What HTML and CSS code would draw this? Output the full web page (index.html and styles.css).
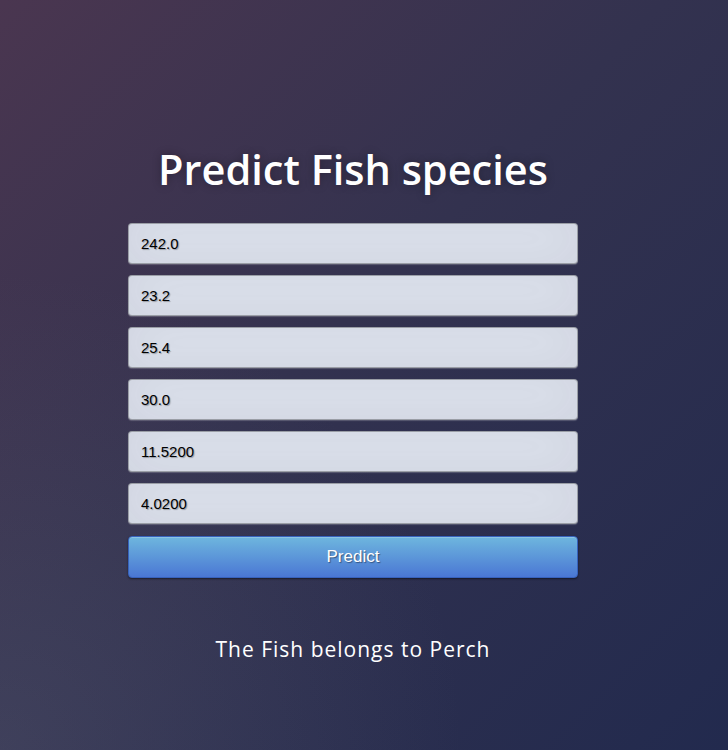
FILE: index.html
```html
<!DOCTYPE html>
<html>
<head>
<meta charset="utf-8">
<link rel="stylesheet" href="styles.css">
</head>
<body>
<main class="login">
  <h1 class="title">Predict Fish species</h1>
  <form class="form">
    <input class="field" type="text" value="242.0">
    <input class="field" type="text" value="23.2">
    <input class="field" type="text" value="25.4">
    <input class="field" type="text" value="30.0">
    <input class="field" type="text" value="11.5200">
    <input class="field" type="text" value="4.0200">
    <button class="btn" type="button">Predict</button>
  </form>
  <p class="result">The Fish belongs to Perch</p>
</main>
</body>
</html>
```
FILE: styles.css
```css
html, body {
  margin: 0;
  padding: 0;
}
body {
  width: 728px;
  height: 750px;
  overflow: hidden;
  background:
    radial-gradient(ellipse at 0% 100%, rgba(104,108,128,0.25) 0%, rgba(104,108,128,0) 45%),
    linear-gradient(135deg, #4a3650 0%, #33324f 45%, #222a4e 100%);
  font-family: "Open Sans", sans-serif;
}
.login {
  width: 450px;
  margin: 0 0 0 128px;
  padding-top: 141px;
  display: flex;
  flex-direction: column;
}
.title {
  height: 56px;
  margin: 0 0 26px;
  font-size: 41.5px;
  font-weight: 600;
  line-height: 56px;
  color: #fff;
  text-align: center;
  text-shadow: 0 0 10px rgba(0,0,0,0.3);
}
.form {
  display: flex;
  flex-direction: column;
  gap: 11px;
}
.field {
  box-sizing: border-box;
  width: 100%;
  height: 41px;
  margin: 0;
  padding: 0 12px;
  font-family: "Liberation Sans", Arial, sans-serif;
  font-size: 15px;
  color: #000;
  text-shadow: 1px 1px 1px rgba(0,0,0,0.3);
  background: #dde2ee;
  border: 1px solid rgba(0,0,0,0.3);
  border-radius: 4px;
  box-shadow: inset 0 -5px 45px rgba(100,100,100,0.1), 0 1px 1px rgba(255,255,255,0.2);
  outline: none;
}
.btn {
  box-sizing: border-box;
  width: 100%;
  height: 42px;
  margin: 1px 0 0;
  font-family: "Liberation Sans", Arial, sans-serif;
  font-size: 17px;
  color: #fff;
  text-shadow: 1px 1px 1px rgba(0,0,0,0.4);
  background: linear-gradient(to bottom, #6eb6de, #4a77d4);
  border: 1px solid #3762bc;
  border-radius: 4px;
  box-shadow: inset 0 1px 0 rgba(255,255,255,0.2), 0 1px 2px rgba(0,0,0,0.5);
  cursor: pointer;
}
.result {
  margin: 57px 0 0;
  font-size: 21px;
  line-height: normal;
  letter-spacing: 1px;
  color: #fff;
  text-align: center;
}
```
